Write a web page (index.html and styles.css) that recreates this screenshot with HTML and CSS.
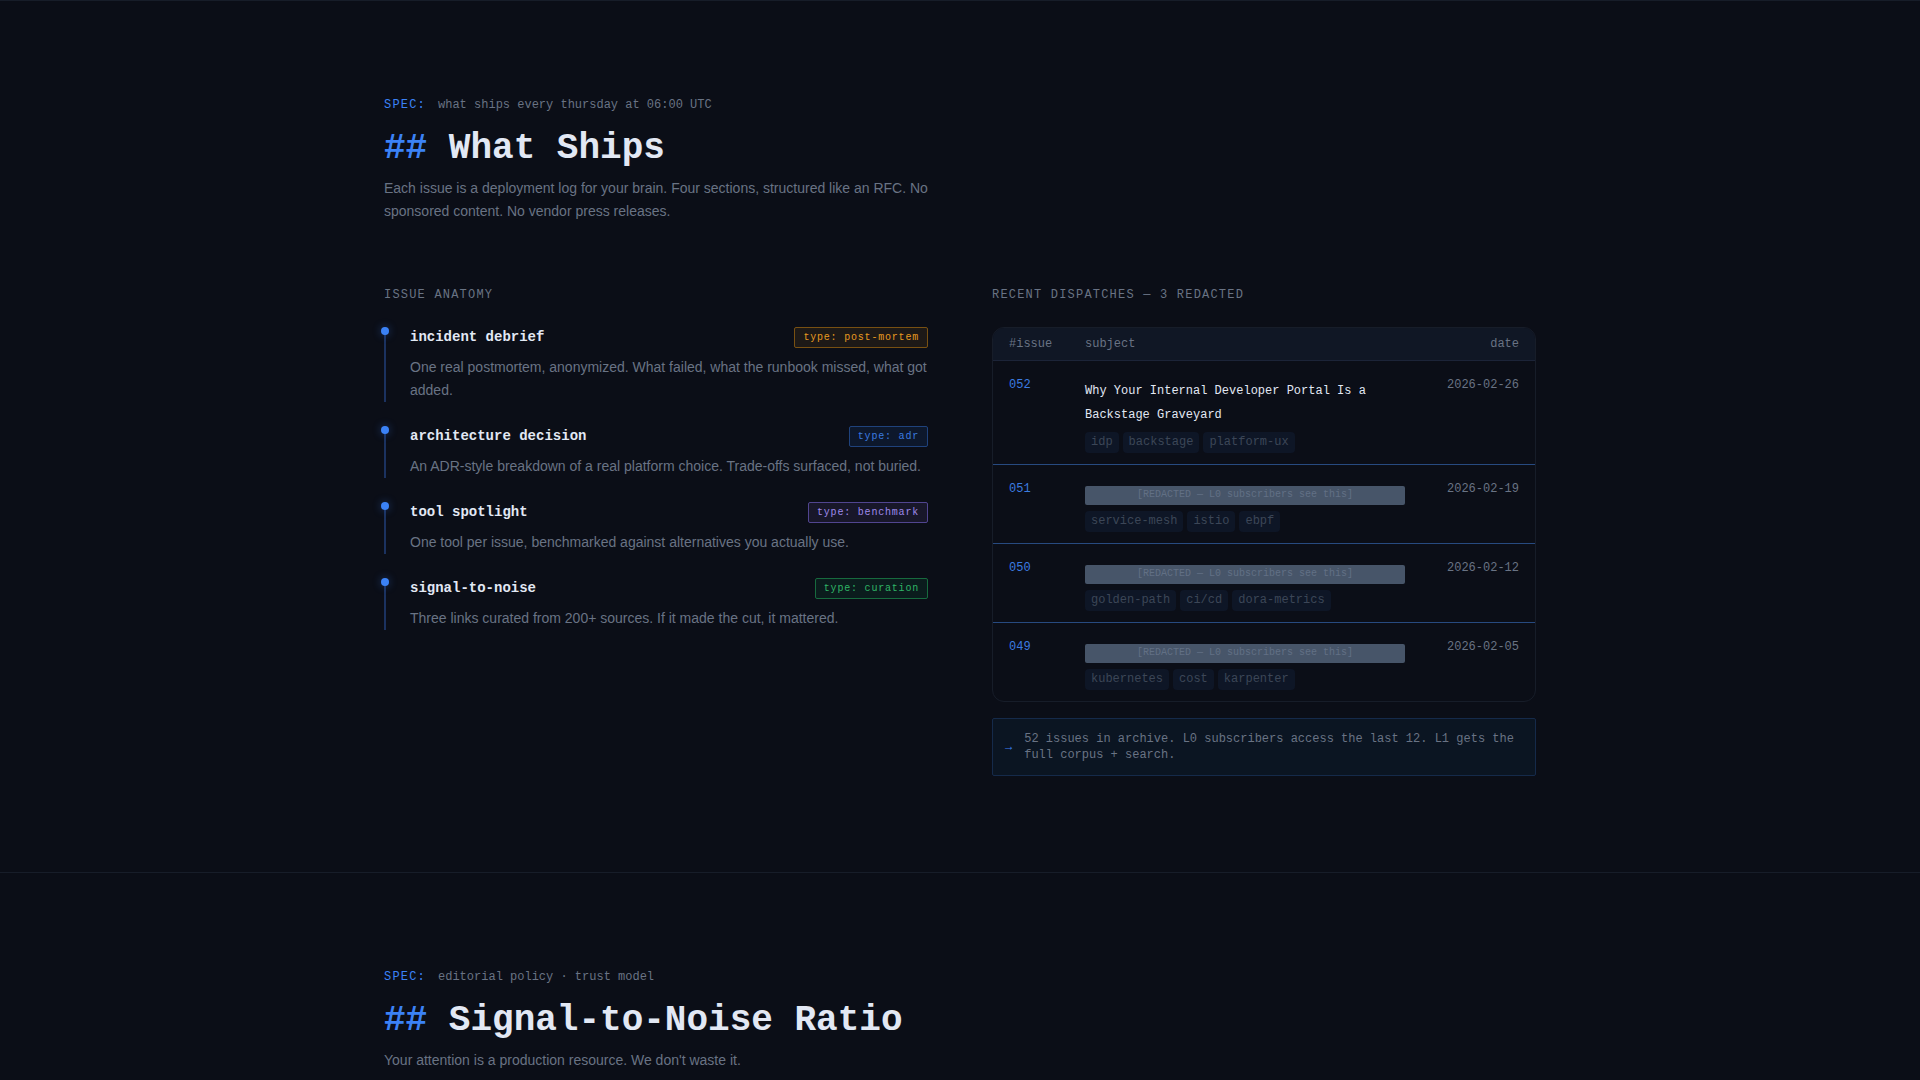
FILE: index.html
```html
<!DOCTYPE html>
<html lang="en">
<head>
    <meta charset="UTF-8">
    <meta name="viewport" content="width=device-width, initial-scale=1.0">
    <title>What Ships</title>
    <link rel="stylesheet" href="styles.css">
</head>
<body>
    <section class="section" id="what-ships">
        <div class="container">
            <header class="section-header">
                <div class="spec"><span class="spec-key">SPEC:</span><span>what ships every thursday at 06:00 UTC</span></div>
                <h2><span class="hash">##</span> What Ships</h2>
                <p>Each issue is a deployment log for your brain. Four sections, structured like an RFC. No sponsored content. No vendor press releases.</p>
            </header>

            <div class="columns">
                <div>
                    <h3 class="label">ISSUE ANATOMY</h3>
                    <ul class="anatomy">
                        <li class="anatomy-item">
                            <div class="item-head">
                                <h4>incident debrief</h4>
                                <span class="badge amber">type: post-mortem</span>
                            </div>
                            <p>One real postmortem, anonymized. What failed, what the runbook missed, what got added.</p>
                        </li>
                        <li class="anatomy-item">
                            <div class="item-head">
                                <h4>architecture decision</h4>
                                <span class="badge blue">type: adr</span>
                            </div>
                            <p>An ADR-style breakdown of a real platform choice. Trade-offs surfaced, not buried.</p>
                        </li>
                        <li class="anatomy-item">
                            <div class="item-head">
                                <h4>tool spotlight</h4>
                                <span class="badge purple">type: benchmark</span>
                            </div>
                            <p>One tool per issue, benchmarked against alternatives you actually use.</p>
                        </li>
                        <li class="anatomy-item">
                            <div class="item-head">
                                <h4>signal-to-noise</h4>
                                <span class="badge green">type: curation</span>
                            </div>
                            <p>Three links curated from 200+ sources. If it made the cut, it mattered.</p>
                        </li>
                    </ul>
                </div>

                <div>
                    <h3 class="label" id="dispatches">RECENT DISPATCHES — 3 REDACTED</h3>
                    <div class="table-wrap">
                        <table aria-labelledby="dispatches">
                            <thead>
                                <tr>
                                    <th class="col-issue">#issue</th>
                                    <th>subject</th>
                                    <th class="col-date">date</th>
                                </tr>
                            </thead>
                            <tbody>
                                <tr>
                                    <td class="issue">052</td>
                                    <td class="subject">
                                        <div class="title">Why Your Internal Developer Portal Is a Backstage Graveyard</div>
                                        <div class="tags"><span>idp</span><span>backstage</span><span>platform-ux</span></div>
                                    </td>
                                    <td class="date">2026-02-26</td>
                                </tr>
                                <tr>
                                    <td class="issue">051</td>
                                    <td class="subject">
                                        <div class="redacted">[REDACTED — L0 subscribers see this]</div>
                                        <div class="tags"><span>service-mesh</span><span>istio</span><span>ebpf</span></div>
                                    </td>
                                    <td class="date">2026-02-19</td>
                                </tr>
                                <tr>
                                    <td class="issue">050</td>
                                    <td class="subject">
                                        <div class="redacted">[REDACTED — L0 subscribers see this]</div>
                                        <div class="tags"><span>golden-path</span><span>ci/cd</span><span>dora-metrics</span></div>
                                    </td>
                                    <td class="date">2026-02-12</td>
                                </tr>
                                <tr>
                                    <td class="issue">049</td>
                                    <td class="subject">
                                        <div class="redacted">[REDACTED — L0 subscribers see this]</div>
                                        <div class="tags"><span>kubernetes</span><span>cost</span><span>karpenter</span></div>
                                    </td>
                                    <td class="date">2026-02-05</td>
                                </tr>
                            </tbody>
                        </table>
                    </div>
                    <div class="note">
                        <span class="arrow">→</span>
                        <span>52 issues in archive. L0 subscribers access the last 12. L1 gets the full corpus + search.</span>
                    </div>
                </div>
            </div>
        </div>
    </section>

    <section class="section" id="signal-to-noise">
        <div class="container">
            <header class="section-header">
                <div class="spec"><span class="spec-key">SPEC:</span><span>editorial policy · trust model</span></div>
                <h2><span class="hash">##</span> Signal-to-Noise Ratio</h2>
                <p>Your attention is a production resource. We don't waste it.</p>
            </header>
        </div>
    </section>
</body>
</html>
```

FILE: styles.css
```css
:root {
    --bg: #0b0e17;
    --panel: #101725;
    --line: #171d29;
    --text: #e2e8f4;
    --muted: #697384;
    --dim: #3c4657;
    --blue: #3b82f6;
    --mono: "Liberation Mono", "Courier New", monospace;
    --sans: "Liberation Sans", Arial, sans-serif;
}
* {
    box-sizing: border-box;
    margin: 0;
    padding: 0;
}
body {
    background: var(--bg);
    color: var(--muted);
    font-family: var(--sans);
    font-size: 14px;
    line-height: 23px;
}
.section {
    border-top: 1px solid var(--line);
    padding: 96px 0;
}
.container {
    max-width: 1200px;
    margin: 0 auto;
    padding: 0 24px;
}
.section-header {
    max-width: 560px;
    margin-bottom: 64px;
}
.spec {
    display: flex;
    gap: 12px;
    font-family: var(--mono);
    font-size: 12px;
    line-height: 16px;
    margin-bottom: 14px;
}
.spec-key {
    color: var(--blue);
    letter-spacing: 0.1em;
}
h2 {
    color: var(--text);
    font-family: var(--mono);
    font-size: 36px;
    line-height: 44px;
    margin-bottom: 6px;
}
.hash {
    color: var(--blue);
}
.columns {
    display: grid;
    grid-template-columns: 1fr 1fr;
    gap: 64px;
}
.label {
    font-family: var(--mono);
    font-size: 12px;
    font-weight: normal;
    letter-spacing: 0.1em;
    line-height: 16px;
    margin-bottom: 24px;
}

/* issue anatomy */
.anatomy {
    display: flex;
    flex-direction: column;
    gap: 24px;
    list-style: none;
}
.anatomy-item {
    position: relative;
    border-left: 2px solid #1b3260;
    padding-left: 24px;
}
.anatomy-item::before {
    content: "";
    position: absolute;
    top: 0;
    left: -5px;
    width: 8px;
    height: 8px;
    border-radius: 50%;
    background: var(--blue);
    box-shadow: 0 0 8px rgba(59, 130, 246, 0.4);
}
.item-head {
    display: flex;
    align-items: flex-start;
    justify-content: space-between;
    margin-bottom: 8px;
}
h4 {
    color: var(--text);
    font-family: var(--mono);
    font-size: 14px;
    line-height: 21px;
}
.badge {
    border: 1px solid;
    border-radius: 2px;
    padding: 0 8px;
    font-family: var(--mono);
    font-size: 10px;
    letter-spacing: 0.08em;
    line-height: 19px;
}
.amber {
    color: #e89a20;
    background: #1d1917;
    border-color: #785012;
}
.blue {
    color: #3b7ce0;
    background: #0d182c;
    border-color: #1f427c;
}
.purple {
    color: #9f8aec;
    background: #18172a;
    border-color: #514590;
}
.green {
    color: #2fb566;
    background: #0b1c1d;
    border-color: #176a3e;
}

/* dispatches */
.table-wrap {
    border: 1px solid var(--line);
    border-radius: 12px;
    overflow: hidden;
}
table {
    width: 100%;
    border-collapse: collapse;
    font-family: var(--mono);
    font-size: 12px;
    line-height: 18px;
}
th {
    background: var(--panel);
    font-weight: normal;
    text-align: left;
    padding: 7px 0;
    border-bottom: 1px solid #1c2438;
}
.col-issue {
    width: 92px;
    padding-left: 16px;
}
.col-date {
    width: 104px;
    padding-right: 16px;
    text-align: right;
}
td {
    vertical-align: top;
    padding: 15px 0 11px;
}
tbody tr + tr td {
    border-top: 1px solid #274a80;
}
td.issue {
    color: #3b7ce0;
    padding-left: 16px;
}
td.subject {
    padding-top: 18px;
}
td.date {
    padding-right: 16px;
    text-align: right;
}
.title {
    color: var(--text);
    line-height: 24px;
    margin-bottom: 5px;
}
.redacted {
    max-width: 320px;
    height: 19px;
    margin: 3px 0 6px;
    border-radius: 2px;
    background: #475569;
    color: #627085;
    font-size: 10px;
    line-height: 18px;
    text-align: center;
    user-select: none;
}
.tags {
    display: flex;
    gap: 4px;
    color: var(--dim);
}
.tags span {
    background: #0e1626;
    border-radius: 4px;
    padding: 0 6px;
    line-height: 21px;
}
.note {
    display: flex;
    align-items: center;
    gap: 12px;
    margin-top: 16px;
    padding: 12px;
    border: 1px solid #152a4a;
    border-radius: 2px;
    background: #0b1522;
    font-family: var(--mono);
    font-size: 12px;
    line-height: 16px;
}
.arrow {
    color: var(--blue);
}
```
